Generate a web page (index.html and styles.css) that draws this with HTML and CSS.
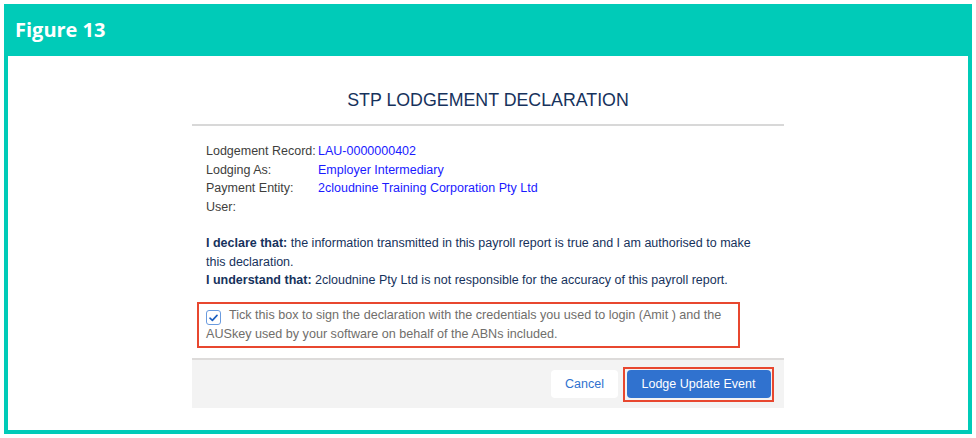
FILE: index.html
```html
<!DOCTYPE html>
<html>
	<head>
		<meta charset="UTF-8">
		<title>Figure 13</title>
		<link rel="stylesheet" href="styles.css">
	</head>
	<body>
		<div id="frame">
			<div id="head">Figure 13</div>
			<div id="canvas">
				<div id="dialog">
					<h1 class="title">STP LODGEMENT DECLARATION</h1>
					<div class="body">
						<ul class="fields">
							<li><span class="label">Lodgement Record:</span><a href="javascript:;">LAU-0000000402</a></li>
							<li><span class="label">Lodging As:</span><a href="javascript:;">Employer Intermediary</a></li>
							<li><span class="label">Payment Entity:</span><a href="javascript:;">2cloudnine Training Corporation Pty Ltd</a></li>
							<li><span class="label">User:</span></li>
						</ul>
						<p class="declare"><b>I declare that:</b> the information transmitted in this payroll report is true and I am authorised to make this declaration.</p>
						<p class="declare"><b>I understand that:</b> 2cloudnine Pty Ltd is not responsible for the accuracy of this payroll report.</p>
						<div class="sign">
							<span class="check">
								<svg width="9" height="8" viewBox="0 0 9 8"><path d="M1 4.2 L3.4 6.4 L8 1.4" fill="none" stroke="#1b5fc1" stroke-width="1.6" stroke-linecap="round" stroke-linejoin="round"/></svg>
							</span>Tick this box to sign the declaration with the credentials you used to login (Amit ) and the AUSkey used by your software on behalf of the ABNs included.
						</div>
					</div>
					<div class="foot">
						<a class="btn cancel" href="javascript:;">Cancel</a>
						<span class="mark"><a class="btn lodge" href="javascript:;">Lodge Update Event</a></span>
					</div>
				</div>
			</div>
		</div>
	</body>
</html>
```

FILE: styles.css
```css
html,body{
	margin: 0;
	background: #fff;
}
ul,li{
	margin: 0;
	padding: 0;
	list-style: none;
}
p{
	margin: 0;
}
a{
	text-decoration: none;
}
#frame{
	width: 968px;
	height: 430px;
	margin: 4px;
	box-sizing: border-box;
	background: #00cbb8;
	padding: 0 4px 4px;
	display: flex;
	flex-direction: column;
}
#head{
	height: 52px;
	box-sizing: border-box;
	padding: 13px 0 0 7px;
	color: #fff;
	font: bold 20px/26px "Open Sans", sans-serif;
}
#canvas{
	flex: 1;
	background: #fff;
}
#dialog{
	width: 592px;
	margin: 0 auto;
	font-family: "Liberation Sans", Arial, sans-serif;
}
.title{
	margin: 0;
	height: 70px;
	box-sizing: border-box;
	padding-top: 33px;
	border-bottom: 2px solid #d8d8d8;
	text-align: center;
	font: 17.8px/22px "Liberation Sans", Arial, sans-serif;
	color: #16325c;
}
.body{
	padding: 16px 14px 10px;
	font-size: 12.5px;
	line-height: 18.5px;
}
.fields li{
	display: flex;
	height: 18.5px;
	color: #3e3e3c;
}
.fields .label{
	width: 112px;
}
.fields a{
	color: #1a1aff;
}
.fields{
	margin-bottom: 18px;
}
.declare{
	color: #16325c;
}
.sign{
	margin: 12px 0 0 -9px;
	width: 525px;
	border: 2.5px solid #e8472f;
	padding: 2px 7px 3px 7px;
	line-height: 18px;
	color: #706e6b;
	font-size: 12.6px;
}
.check{
	display: inline-flex;
	align-items: center;
	justify-content: center;
	width: 13px;
	height: 13px;
	border: 1px solid #6a9bdf;
	border-radius: 3px;
	margin-right: 8px;
	vertical-align: -3px;
	background: #fff;
}
.foot{
	height: 50px;
	box-sizing: border-box;
	background: #f3f3f3;
	border-top: 2px solid #dddbda;
	display: flex;
	justify-content: flex-end;
	align-items: center;
	padding-right: 10px;
}
.btn{
	display: inline-block;
	height: 28px;
	line-height: 28px;
	font-size: 12.5px;
	border-radius: 4px;
	text-align: center;
}
.cancel{
	width: 67px;
	background: #fff;
	color: #3072cf;
	margin-right: 5px;
}
.mark{
	border: 2.5px solid #e8472f;
	padding: 1.5px;
}
.lodge{
	display: block;
	width: 144px;
	background: #3072cf;
	color: #fff;
}
```
